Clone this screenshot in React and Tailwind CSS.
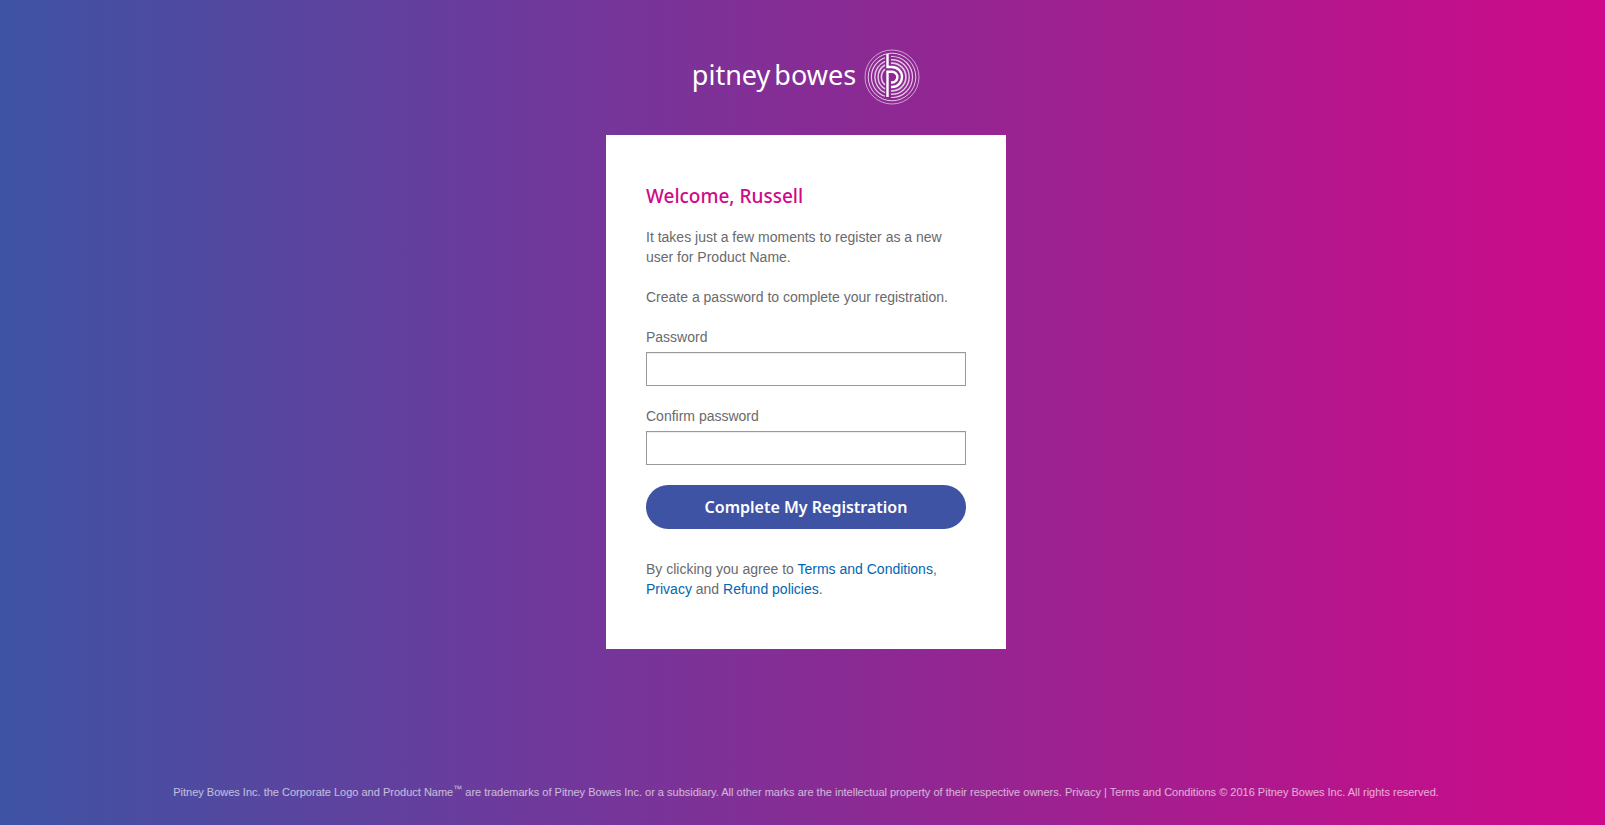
const link = "text-[#0066b3] hover:underline";

function Emblem() {
  return (
    <svg viewBox="0 0 56 56" className="size-14" fill="none" stroke="#fff" aria-hidden="true">
      <circle cx="28" cy="28" r="27" strokeWidth="0.8" opacity="0.7" />
      <circle cx="28" cy="28" r="23.8" strokeWidth="1" opacity="0.75" />
      <g opacity="0.75">
        <path d="M21 8.7 A20.5 20.5 0 0 0 21 47.3" strokeWidth="1.2" />
        <path d="M21 12.3 A17.2 17.2 0 0 0 21 43.7" strokeWidth="1.4" />
        <path d="M21 16 A13.9 13.9 0 0 0 21 40" strokeWidth="1.5" />
        <path d="M21 20.1 A10.5 10.5 0 0 0 21 35.9" strokeWidth="1.6" />
        <path d="M27 7.5 H28 A20.5 20.5 0 0 1 28 48.5 H27" strokeWidth="1.2" />
        <path d="M27 10.8 H28 A17.2 17.2 0 0 1 28 45.2 H27" strokeWidth="1.4" />
        <path d="M27 14.1 H28 A13.9 13.9 0 0 1 28 41.9 H27" strokeWidth="1.7" />
      </g>
      <path d="M23.5 5 V18 H28 A10 10 0 0 1 28 38 H27" strokeWidth="2.4" />
      <path d="M23.5 48 V22.7 H28 A5.4 5.4 0 0 1 28 33.5 H27" strokeWidth="2.4" />
    </svg>
  );
}

function PasswordField({ id, label }) {
  return (
    <div className="mb-5">
      <label htmlFor={id} className="mb-[5px] block">{label}</label>
      <input
        id={id}
        type="password"
        className="block h-[34px] w-full border border-[#98999b] bg-white px-2 shadow-[inset_0_1px_1px_rgba(0,0,0,0.075)] outline-none focus:border-[#3e53a4]"
      />
    </div>
  );
}

export default function App() {
  return (
    <div className="flex min-h-screen flex-col items-center bg-[linear-gradient(90deg,#3e53a4_0%,#6d3a9c_32%,#8d2993_55%,#cf0989_100%)] pl-[7px] font-['Liberation_Sans',Arial,sans-serif] text-sm leading-5 text-[#696a6d]">
      <header className="flex items-start gap-2 pt-[49px] pb-[30px] text-white">
        <span className="flex gap-1 pt-1.5 font-['Noto_Sans',sans-serif] text-[27px] leading-10">
          <span>pitney</span>
          <span>bowes</span>
        </span>
        <Emblem />
      </header>
      <main className="w-full max-w-[400px] bg-white px-10 pt-[47px] pb-[50px]">
        <h1 className="mb-[17px] font-['Noto_Sans',sans-serif] text-[19px] leading-7 font-medium text-[#cf0989]">Welcome, Russell</h1>
        <p className="mb-5">It takes just a few moments to register as a new user for Product Name.</p>
        <p className="mb-5">Create a password to complete your registration.</p>
        <form onSubmit={(e) => e.preventDefault()}>
          <PasswordField id="password" label="Password" />
          <PasswordField id="confirm" label="Confirm password" />
          <button
            type="submit"
            className="h-11 w-full cursor-pointer rounded-full bg-[#3e53a4] font-['Noto_Sans',sans-serif] text-base font-semibold text-white"
          >
            Complete My Registration
          </button>
        </form>
        <p className="mt-[30px]">
          By clicking you agree to <a href="#terms" className={link}>Terms and Conditions</a>,{" "}
          <a href="#privacy" className={link}>Privacy</a> and <a href="#refund" className={link}>Refund policies</a>.
        </p>
      </main>
      <footer className="mt-auto px-5 pt-8 pb-[23px] text-center text-[11px] text-white/65">
        Pitney Bowes Inc. the Corporate Logo and Product Name<sup className="text-[9px]">™</sup> are trademarks of Pitney
        Bowes Inc. or a subsidiary. All other marks are the intellectual property of their respective owners.{" "}
        <a href="#privacy">Privacy</a> | <a href="#terms">Terms and Conditions</a> © 2016 Pitney Bowes Inc. All rights
        reserved.
      </footer>
    </div>
  );
}
